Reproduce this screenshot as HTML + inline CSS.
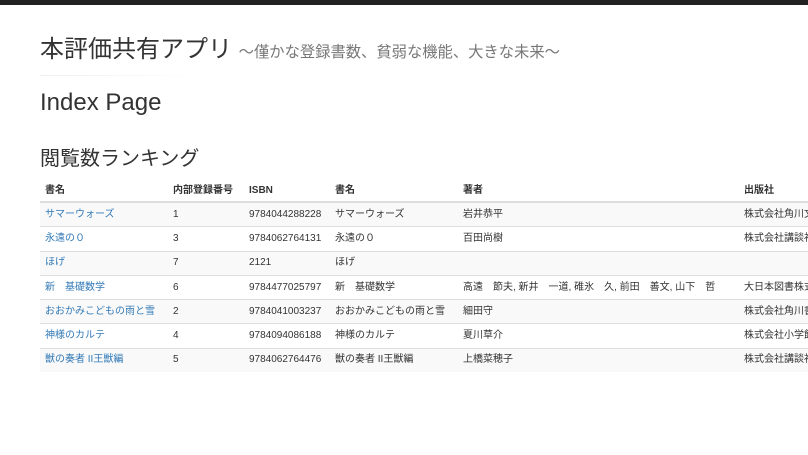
<!DOCTYPE html>
<html><head><meta charset="utf-8"><style>
html,body{margin:0;padding:0;width:808px;height:455px;overflow:hidden;background:#fff}
body{font-family:"Liberation Sans","Noto Sans CJK JP",sans-serif;color:#333}
.bar{height:5px;background:#222}
h1{position:absolute;left:40px;top:34px;margin:0;font-size:24px;font-weight:400;line-height:32px;color:#333;white-space:nowrap}
h1 small{font-size:15.3px;color:#777;font-weight:400}
.hr{position:absolute;left:40px;top:75px;width:160px;height:1px;background:linear-gradient(90deg,#eee,#fff)}
.ip{position:absolute;left:40px;top:89px;font-size:24px;line-height:28px;font-weight:400}
.rk{position:absolute;left:40px;top:147px;font-size:20px;line-height:24px;font-weight:400}
table{position:absolute;left:40px;top:180px;border-collapse:collapse;font-size:10px;width:820px}
th{text-align:left;font-weight:bold;height:21px;padding:0 5px;border-bottom:2px solid #ddd;color:#333;vertical-align:middle;line-height:12px}
td{height:23.3px;padding:0 5px;border-top:1px solid #ddd;white-space:nowrap;color:#333;vertical-align:middle;line-height:12px}
tbody tr:nth-child(odd){background:#f9f9f9}
a{color:#337ab7;text-decoration:none}
</style></head><body>
<div class="bar"></div>
<h1>本評価共有アプリ <small>〜僅かな登録書数、貧弱な機能、大きな未来〜</small></h1>
<div class="hr"></div>
<div class="ip">Index Page</div>
<div class="rk">閲覧数ランキング</div>
<table>
<colgroup><col style="width:128px"><col style="width:76px"><col style="width:86px"><col style="width:128px"><col style="width:281px"><col></colgroup>
<thead><tr><th>書名</th><th>内部登録番号</th><th>ISBN</th><th>書名</th><th>著者</th><th>出版社</th></tr></thead>
<tbody>
<tr><td><a>サマーウォーズ</a></td><td>1</td><td>9784044288228</td><td>サマーウォーズ</td><td>岩井恭平</td><td>株式会社角川文庫</td></tr>
<tr><td><a>永遠の０</a></td><td>3</td><td>9784062764131</td><td>永遠の０</td><td>百田尚樹</td><td>株式会社講談社</td></tr>
<tr><td><a>ほげ</a></td><td>7</td><td>2121</td><td>ほげ</td><td></td><td></td></tr>
<tr><td><a>新　基礎数学</a></td><td>6</td><td>9784477025797</td><td>新　基礎数学</td><td>高遠　節夫, 新井　一道, 碓氷　久, 前田　善文, 山下　哲</td><td>大日本図書株式会社</td></tr>
<tr><td><a>おおかみこどもの雨と雪</a></td><td>2</td><td>9784041003237</td><td>おおかみこどもの雨と雪</td><td>細田守</td><td>株式会社角川書店</td></tr>
<tr><td><a>神様のカルテ</a></td><td>4</td><td>9784094086188</td><td>神様のカルテ</td><td>夏川草介</td><td>株式会社小学館</td></tr>
<tr><td><a>獣の奏者 II王獣編</a></td><td>5</td><td>9784062764476</td><td>獣の奏者 II王獣編</td><td>上橋菜穂子</td><td>株式会社講談社</td></tr>
</tbody></table>
</body></html>
